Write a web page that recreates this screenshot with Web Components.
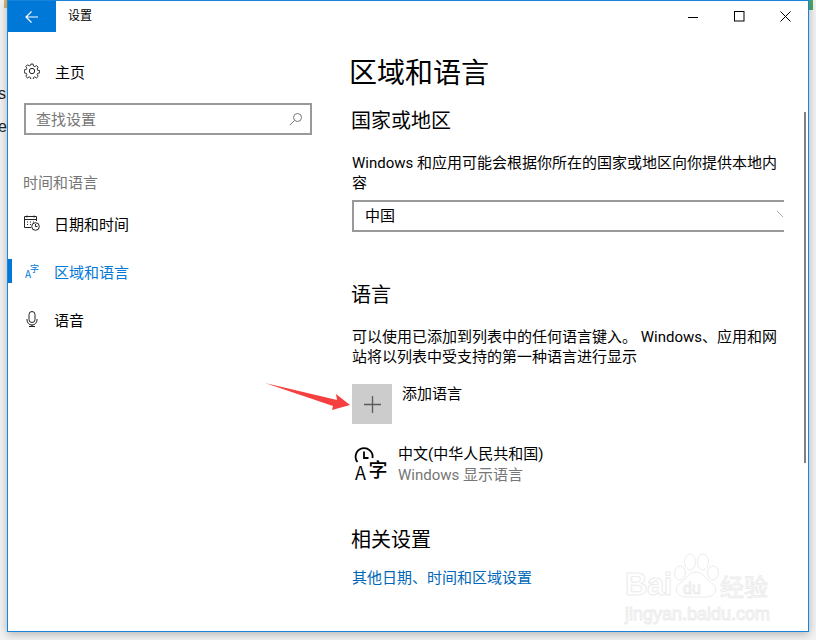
<!DOCTYPE html>
<html lang="zh-CN"><head><meta charset="utf-8"><title>设置</title>
<style>
html,body{margin:0;padding:0;height:640px;overflow:hidden;background:#f3f3f3;font-family:Roboto,"Noto Sans CJK SC",sans-serif;}
</style></head><body>
<desk-bg></desk-bg>
<settings-app></settings-app>
<script>
const T=(s)=>{const t=document.createElement('template');t.innerHTML=s;return t;};
function def(name,tpl){customElements.define(name,class extends HTMLElement{constructor(){super();this.attachShadow({mode:'open'}).appendChild(tpl.content.cloneNode(true));}});}
def('desk-bg',T(`<style>
:host{position:absolute;left:0;top:0;width:816px;height:640px;display:block;overflow:hidden;font:16px/16px "Liberation Sans",sans-serif;color:#222}
span{position:absolute;white-space:nowrap}
.s{left:-2px;top:86px}.e{left:-2px;top:119px}
.y{left:4px;top:0;width:3px;height:8px;background:#d9b566}
.g{left:809px;top:0;width:4px;height:10px;background:#4aa86c}
</style><span class="s">s</span><span class="e">e</span><span class="y"></span><span class="g"></span>`));
def('win-bar',T(`<style>
:host{display:flex;height:31px;align-items:stretch;color:#000}
.back{width:48px;background:#0078d7;display:flex;align-items:center;justify-content:center}
.t{margin-left:12px;font-size:12px;line-height:30px}
.sp{flex:1}
.c{width:46px;display:flex;align-items:center;justify-content:center;padding-bottom:1px}
</style>
<div class="back"><svg width="16" height="14" viewBox="0 0 16 14" fill="none" stroke="#fff" stroke-width="1.2"><path d="M14 7H2M7.500 1.500L2 7l5.500 5.500"/></svg></div>
<div class="t">设置</div><div class="sp"></div>
<div class="c"><svg width="11" height="11" viewBox="0 0 11 11" stroke="#000" fill="none"><path d="M0 6.500H10"/></svg></div>
<div class="c"><svg width="11" height="11" viewBox="0 0 11 11" stroke="#000" fill="none"><rect x=".5" y=".5" width="9.500" height="9.500"/></svg></div>
<div class="c"><svg width="11" height="11" viewBox="0 0 11 11" stroke="#000" fill="none"><path d="M.5 .5L10.500 10.500M10.500 .5L.5 10.500"/></svg></div>`));
def('nav-item',T(`<style>
:host{display:flex;align-items:center;height:48px;padding-left:16px;font-size:15px;color:#000;position:relative}
:host([active]){color:#0078d7}
:host([active])::before{content:"";position:absolute;left:0;top:12px;width:4px;height:24px;background:#0078d7}
.i{width:16px;height:16px;margin-right:var(--gap,14px);display:flex}
</style><span class="i"><slot name="icon"></slot></span><slot></slot>`));
def('search-box',T(`<style>
:host{display:flex;align-items:center;box-sizing:border-box;height:32px;width:288px;border:2px solid #999;padding:0 7px 1px 10px;font-size:15px;color:#777}
span{flex:1}
</style><span><slot></slot></span><svg width="14" height="14" viewBox="0 0 14 14" fill="none" stroke="#777"><circle cx="8.500" cy="5.500" r="4"/><path d="M5.500 8.500L.8 13.200"/></svg>`));
def('side-bar',T(`<style>
:host{display:block;width:344px;flex:none;box-sizing:border-box}
.home{margin-top:15px}
.s{margin:8px 0 0 16px}
.g{margin:38px 0 6px 15px;font-size:15px;line-height:20px;color:#767676}
</style><div class="home"><slot name="home"></slot></div><div class="s"><slot name="search"></slot></div><div class="g"><slot name="group"></slot></div><slot></slot>`));
def('combo-box',T(`<style>
:host{display:flex;align-items:center;box-sizing:border-box;height:32px;border:solid #999;border-width:2px 0 2px 2px;padding:0 0 3px 11px;font-size:15px;color:#000;width:432px}
span{flex:1}
</style><span><slot></slot></span><svg width="7" height="7" viewBox="0 0 7 7" fill="none" stroke="#aaa"><path d="M0 0l6 6"/></svg>`));
def('add-button',T(`<style>
:host{display:flex;align-items:flex-start;font-size:15px;color:#000}
.b{width:40px;height:40px;background:#ccc;display:flex;align-items:center;justify-content:center;margin-right:10px}
.l{line-height:20px}
</style><div class="b"><svg width="17" height="17" viewBox="0 0 17 17" stroke="#5a5a5a" stroke-width="1.300" fill="none"><path d="M8.500 0V17M0 8.500H17"/></svg></div><div class="l"><slot></slot></div>`));
def('lang-item',T(`<style>
:host{display:flex;font-size:15px;color:#000}
.i{width:46px;height:40px;flex:none}
.t{line-height:21px}
.sub{color:#767676}
</style><div class="i"><slot name="icon"></slot></div><div class="t"><div><slot></slot></div><div class="sub"><slot name="sub"></slot></div></div>`));
def('main-pane',T(`<style>
:host{display:block;flex:1;min-width:0;position:relative}
.in{width:432px;}
</style><div class="in"><slot></slot></div>`));
def('baidu-mark',T(`<style>
:host{position:absolute;left:617px;top:552px;width:150px;height:74px;display:block;pointer-events:none}
svg{position:absolute;left:0;top:0}
.b,.j,.d,.cn{position:absolute;color:#fff;-webkit-text-stroke:1px #ececec;font-family:"Liberation Sans",sans-serif;white-space:nowrap}
.b{left:0;top:14px;font-size:31px;line-height:36px;font-weight:700;letter-spacing:-.5px}
.cn{left:95px;top:18px;font-family:"Noto Sans CJK SC",sans-serif;font-size:24px;line-height:30px}
.j{left:0;top:50px;font-size:18px;line-height:22px}
.d{left:58px;top:28px;font-size:16px;line-height:16px}
</style><svg width="150" height="60" viewBox="0 0 150 60" fill="#fff" stroke="#ececec">
<ellipse cx="65" cy="9" rx="5.500" ry="8"/><ellipse cx="78" cy="9" rx="5.500" ry="8"/><ellipse cx="55" cy="20" rx="5.500" ry="7"/><ellipse cx="88" cy="20" rx="5.500" ry="7"/>
<path d="M71 19c-7 0-9 6-14 10-5 3-7 6-5 10 3 6 9 5 19 5s16 1 19-5c2-4 0-7-5-10-5-4-7-10-14-10z"/></svg>
<div class="b">Bai</div><div class="d">du</div><div class="cn">经验</div><div class="j">jingyan.baidu.com</div>`));
def('red-arrow',T(`<style>:host{position:absolute;left:250px;top:375px;display:block;width:100px;height:40px;line-height:0}</style>
<svg width="100" height="40" viewBox="0 0 100 40"><path d="M7 7L79 24 78 18 92 29 74 34 75 30z" fill="#f6403f"/></svg>`));
def('settings-app',T(`<style>
:host{display:flex;flex-direction:column;box-sizing:border-box;width:802px;height:632px;margin-left:7px;background:#fff;border:1px solid #1a84dc;position:relative;box-shadow:0 2px 9px rgba(0,0,0,.28);font-family:Roboto,"Noto Sans CJK SC",sans-serif}
.body{display:flex;flex:1;min-height:0;position:relative}
h1{font-weight:400;font-size:28px;line-height:40px;margin:22px 0 0 -3px}
h2{font-weight:400;font-size:20px;line-height:28px;margin:0 0 0 -1px}
p{margin:0;font-size:15px;line-height:20px;width:432px}
a{color:#0067b8;font-size:15px;line-height:20px;text-decoration:none;display:block}
.rail{position:absolute;right:2px;top:80px;width:2px;height:351px;background:#808080}
svg text{font-family:"Noto Sans CJK SC",sans-serif}
</style>
<win-bar></win-bar>
<div class="body">
<side-bar>
 <nav-item slot="home" style="--gap:15px"><svg slot="icon" width="16" height="16" viewBox="0 0 16 16" fill="none" stroke="#222"><circle cx="8" cy="8" r="2.700"/><path d="M6.800 .7h2.400l.4 2.100 1.300.6 1.900-1.100 1.700 1.700-1.100 1.900.6 1.300 2.100.4v2.400l-2.100.4-.6 1.300 1.100 1.900-1.700 1.700-1.900-1.100-1.300.6-.4 2.100H6.800l-.4-2.100-1.300-.6-1.900 1.100-1.700-1.700 1.100-1.900-.6-1.300-2.100-.4V6.800l2.100-.4.600-1.300-1.100-1.900 1.700-1.700 1.900 1.100 1.300-.6z" transform="translate(.4 .4) scale(.95)"/></svg>主页</nav-item>
 <search-box slot="search">查找设置</search-box>
 <span slot="group">时间和语言</span>
 <nav-item><svg slot="icon" width="16" height="16" viewBox="0 0 16 16" fill="none" stroke="#222"><path d="M7 12.500H.5V1.500h12V6M.5 4.500h12M3 .5v2M10 .5v2"/><path d="M3 7h1M6 7h1M9 7h1M3 9.500h1M6 9.500h1" stroke-width="1.200"/><circle cx="11.500" cy="11.500" r="3.800"/><path d="M11.500 9v2.500h2"/></svg>日期和时间</nav-item>
 <nav-item active><svg slot="icon" width="16" height="17" viewBox="0 0 16 17" fill="#0078d7"><text x="1" y="15" font-size="10">A</text><text x="6" y="9" font-size="9">字</text></svg>区域和语言</nav-item>
 <nav-item><svg slot="icon" width="16" height="16" viewBox="0 0 16 16" fill="none" stroke="#222"><rect x="5" y=".5" width="6" height="11" rx="3"/><path d="M3 8v1a5 5 0 0010 0V8M8 13.500v2M5 15.500h6"/></svg>语音</nav-item>
</side-bar>
<main-pane>
 <h1>区域和语言</h1>
 <h2 style="margin-top:13px">国家或地区</h2>
 <p style="margin-top:18px">Windows 和应用可能会根据你所在的国家或地区向你提供本地内容</p>
 <combo-box style="margin-top:7px">中国</combo-box>
 <h2 style="margin-top:49px">语言</h2>
 <p style="margin-top:18px">可以使用已添加到列表中的任何语言键入。 Windows、应用和网站将以列表中受支持的第一种语言进行显示</p>
 <add-button style="margin-top:17px">添加语言</add-button>
 <lang-item style="margin-top:20px"><svg slot="icon" width="36" height="40" viewBox="0 0 36 40" fill="none" stroke="#000"><path d="M5.500 18a8.500 8.500 0 1 1 15-4" stroke-width="1.800"/><path d="M12 7.500v6.500h4.500" stroke-width="1.800"/><text x="3" y="36" font-size="18" fill="#000" stroke="none">A</text><text x="16.500" y="33" font-size="19" fill="#000" stroke="none" font-weight="500">字</text></svg>中文(中华人民共和国)<span slot="sub">Windows 显示语言</span></lang-item>
 <h2 style="margin-top:40px">相关设置</h2>
 <a style="margin-top:14px" href="#">其他日期、时间和区域设置</a>
</main-pane>
<div class="rail"></div>
</div>
<red-arrow></red-arrow>
<baidu-mark></baidu-mark>`));
</script></body></html>
